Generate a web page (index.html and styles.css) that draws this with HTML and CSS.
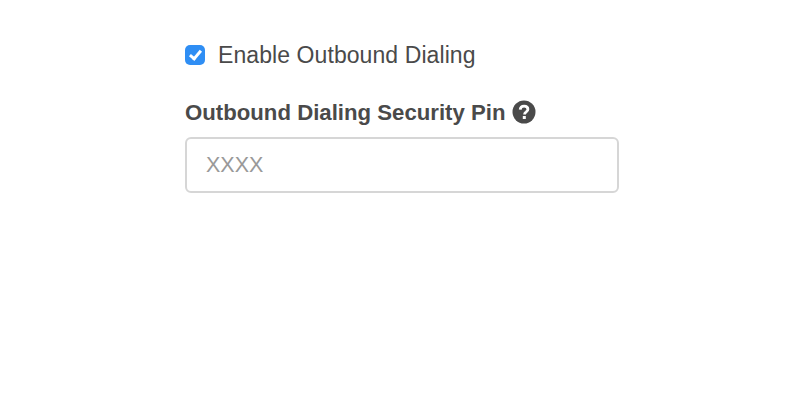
FILE: index.html
```html
<!DOCTYPE html>
<html lang="en">
<head>
    <meta charset="UTF-8">
    <title>Outbound Dialing</title>
    <link rel="stylesheet" href="styles.css">
</head>
<body>
    <div class="container">
        <label class="check-row">
            <input type="checkbox" class="check" checked>
            <span>Enable Outbound Dialing</span>
        </label>
        <div class="pin-label">
            <span>Outbound Dialing Security Pin</span>
            <svg class="help" viewBox="0 0 24 24" width="24" height="24">
                <circle cx="12" cy="12" r="11.5" fill="#4a4a4a"/>
                <path d="M8.2 9.6c.2-2.3 1.8-3.5 3.9-3.5 2.2 0 3.8 1.2 3.8 3.1 0 1.5-.9 2.2-1.9 2.9-.9.6-1.4 1-1.4 2.2v.3" fill="none" stroke="#fff" stroke-width="2.8"/>
                <rect x="10.8" y="16" width="3" height="3" fill="#fff"/>
            </svg>
        </div>
        <input type="text" class="pin-input" placeholder="XXXX">
    </div>
</body>
</html>
```

FILE: styles.css
```css
body {
    margin: 0;
    padding: 0;
    background-color: #fff;
    font-family: "Liberation Sans", Arial, sans-serif;
    color: #4a4a4a;
}

.container {
    width: 434px;
    margin-left: 185px;
    padding-top: 42px;
}

.check-row {
    display: flex;
    align-items: center;
    gap: 13px;
    height: 26px;
    font-size: 23px;
    letter-spacing: 0.08px;
}

.check {
    appearance: none;
    position: relative;
    width: 20px;
    height: 20px;
    margin: 0;
    border-radius: 5px;
    background-color: #2f8ef4;
}

.check:checked::after {
    content: "";
    position: absolute;
    left: 7px;
    top: 3px;
    width: 4px;
    height: 9px;
    border: solid #fff;
    border-width: 0 3px 3px 0;
    transform: rotate(40deg);
}

.pin-label {
    display: flex;
    align-items: center;
    gap: 6px;
    margin-top: 32px;
    height: 26px;
    font-size: 22.2px;
    font-weight: bold;
}

.help {
    display: block;
    margin-top: -2px;
}

.pin-input {
    display: block;
    box-sizing: border-box;
    width: 434px;
    height: 56px;
    margin-top: 11px;
    padding: 0 19px;
    border: 2px solid #d6d6d6;
    border-radius: 6px;
    font-family: inherit;
    font-size: 21.5px;
    outline: none;
}

.pin-input::placeholder {
    color: #999;
}
```
